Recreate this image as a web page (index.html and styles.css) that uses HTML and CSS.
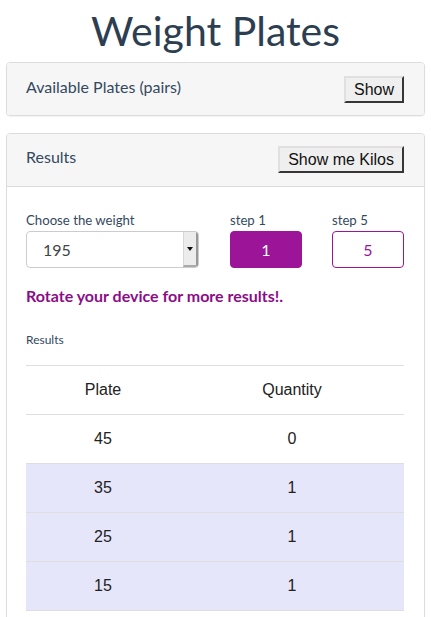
FILE: index.html
```html
<!DOCTYPE html>
<html>
<head>
<meta charset="utf-8">
<link rel="stylesheet" href="styles.css">
</head>
<body>
<h1 class="title">Weight Plates</h1>
<div class="panel">
  <div class="panel-heading">
    <span class="heading-text">Available Plates (pairs)</span>
    <button class="native-btn">Show</button>
  </div>
</div>
<div class="panel panel-results">
  <div class="panel-heading heading-bordered">
    <span class="heading-text">Results</span>
    <button class="native-btn">Show me Kilos</button>
  </div>
  <div class="panel-body">
    <div class="controls">
      <div class="field field-weight">
        <div class="label">Choose the weight</div>
        <div class="select">
          <span class="select-value">195</span>
          <span class="select-arrow"><span class="tri"></span></span>
        </div>
      </div>
      <div class="field field-step">
        <div class="label">step 1</div>
        <div class="step step-active">1</div>
      </div>
      <div class="field field-step">
        <div class="label">step 5</div>
        <div class="step step-outline">5</div>
      </div>
    </div>
    <p class="rotate">Rotate your device for more results!.</p>
    <div class="small-label">Results</div>
    <table class="results">
      <thead>
        <tr><th class="col-plate">Plate</th><th class="col-qty">Quantity</th></tr>
      </thead>
      <tbody>
        <tr><td>45</td><td>0</td></tr>
        <tr class="hl"><td>35</td><td>1</td></tr>
        <tr class="hl"><td>25</td><td>1</td></tr>
        <tr class="hl"><td>15</td><td>1</td></tr>
      </tbody>
    </table>
  </div>
</div>
</body>
</html>
```
FILE: styles.css
```css
* { box-sizing: border-box; }
html, body { margin: 0; padding: 0; background: #fff; }
body {
  font-family: Lato, "Noto Sans", sans-serif;
  color: #2c3e50;
  width: 431px;
  overflow: hidden;
}
.title {
  margin: 0;
  padding-top: 7px;
  height: 62px;
  line-height: 48px;
  font-size: 41px;
  font-weight: 400;
  text-align: center;
  color: #2c3e50;
}
.panel {
  margin: 0 6px;
  border: 1px solid #dcdcdc;
  border-radius: 4px;
  background: #fff;
  box-shadow: 0 1px 1px rgba(0,0,0,0.05);
}
.panel + .panel { margin-top: 17px; }
.panel-heading {
  display: flex;
  justify-content: space-between;
  align-items: flex-start;
  background: #f6f6f6;
  height: 52px;
  padding: 12px 20px 0 19px;
  border-radius: 3px;
}
.heading-bordered {
  border-bottom: 1px solid #dcdcdc;
  height: 53px;
  border-radius: 3px 3px 0 0;
}
.heading-text {
  font-size: 16px;
  line-height: 24px;
  color: #34495e;
}
.panel-results .heading-text { line-height: 22px; }
.native-btn {
  font-family: "Liberation Sans", Arial, sans-serif;
  font-size: 16px;
  color: #111;
  background: #efefef;
  border: 2px outset #c8c8c8;
  border-color: #e0e0e0 #8a8a8a #8a8a8a #e0e0e0;
  height: 27px;
  padding: 0 8px;
  margin-top: 1px;
}
.panel-results .native-btn { margin-top: 0; }
.panel-body {
  padding: 25px 20px 0 19px;
  height: 440px;
}
.controls {
  display: flex;
  align-items: flex-end;
}
.field-weight { width: 173px; margin-right: 31px; }
.field-step { width: 72px; }
.field-step + .field-step { margin-left: 30px; }
.label {
  font-size: 13.2px;
  line-height: 16px;
  margin-bottom: 3px;
  color: #34495e;
}
.select {
  display: flex;
  height: 37px;
  border: 1px solid #ccc;
  border-radius: 4px;
  background: #fff;
  overflow: hidden;
}
.select-value {
  flex: 1;
  padding-left: 16px;
  line-height: 35px;
  font-size: 16px;
  color: #444;
}
.select-arrow {
  width: 15px;
  background: #ececec;
  border-left: 1px solid #d8d8d8;
  border-right: 2px solid #999;
  border-bottom: 2px solid #aaa;
  display: flex;
  align-items: center;
  justify-content: center;
}
.tri {
  width: 0; height: 0;
  border-left: 3px solid transparent;
  border-right: 3px solid transparent;
  border-top: 4px solid #111;
}
.step {
  height: 37px;
  border-radius: 4px;
  text-align: center;
  line-height: 35px;
  font-size: 16px;
}
.step-active {
  background: #9c1599;
  border: 1px solid #9c1599;
  color: #fff;
}
.step-outline {
  background: #fff;
  border: 1px solid #9c1599;
  color: #9c1599;
}
.rotate {
  margin: 18px 0 0;
  font-size: 16px;
  line-height: 20px;
  font-weight: 700;
  color: #8b0d88;
}
.small-label {
  margin-top: 26px;
  font-size: 12px;
  line-height: 16px;
  color: #34495e;
}
.results {
  margin-top: 17px;
  width: 378px;
  border-collapse: collapse;
  font-family: "Liberation Sans", Arial, sans-serif;
  font-size: 16px;
  color: #222;
}
.results th, .results td {
  height: 49px;
  text-align: center;
  font-weight: 400;
  border-top: 1px solid #dedede;
  padding: 0;
}
.results tbody tr:last-child td { border-bottom: 1px solid #dedede; }
.col-plate { width: 154px; }
.col-qty { width: 224px; }
.results tr.hl td { background: #e6e6fa; }
```
